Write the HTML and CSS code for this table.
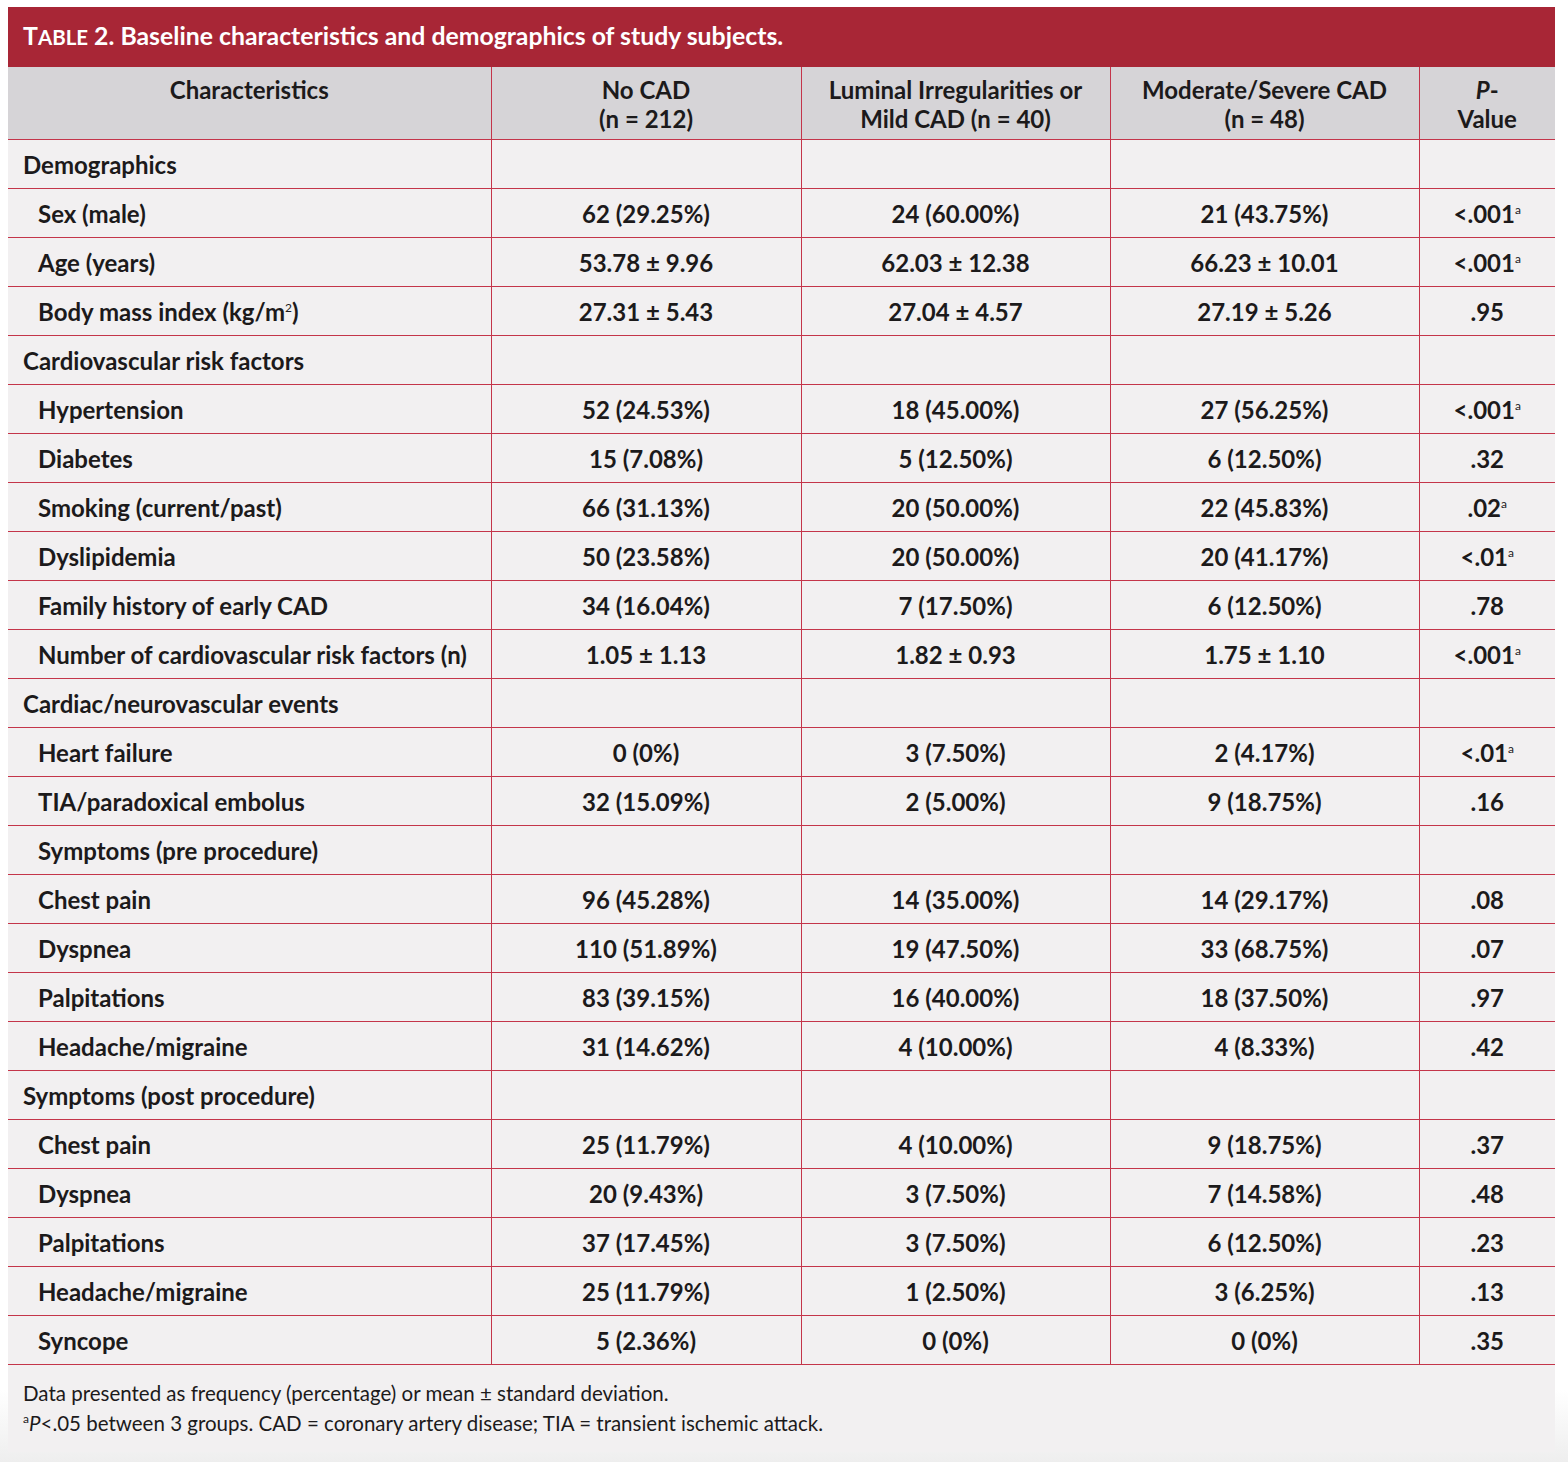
FILE: index.html
```html
<!DOCTYPE html>
<html lang="en">
<head>
<meta charset="utf-8">
<title>Table 2</title>
<link rel="stylesheet" href="styles.css">
</head>
<body>
<div class="card">
  <div class="caption"><span class="cap-text">T<span class="sc">able</span> 2. Baseline characteristics and demographics of study subjects.</span></div>
  <table class="data">
    <colgroup>
      <col class="c1"><col class="c2"><col class="c3"><col class="c4"><col class="c5">
    </colgroup>
    <thead>
      <tr>
        <th>Characteristics</th>
        <th>No CAD<br>(n = 212)</th>
        <th>Luminal Irregularities or<br>Mild CAD (n = 40)</th>
        <th>Moderate/Severe CAD<br>(n = 48)</th>
        <th><i>P</i>-<br>Value</th>
      </tr>
    </thead>
    <tbody>
      <tr class="sec"><td>Demographics</td><td></td><td></td><td></td><td></td></tr>
      <tr><td class="sub">Sex (male)</td><td>62 (29.25%)</td><td>24 (60.00%)</td><td>21 (43.75%)</td><td>&lt;.001<sup>a</sup></td></tr>
      <tr><td class="sub">Age (years)</td><td>53.78 ± 9.96</td><td>62.03 ± 12.38</td><td>66.23 ± 10.01</td><td>&lt;.001<sup>a</sup></td></tr>
      <tr><td class="sub">Body mass index (kg/m<sup>2</sup>)</td><td>27.31 ± 5.43</td><td>27.04 ± 4.57</td><td>27.19 ± 5.26</td><td>.95</td></tr>
      <tr class="sec"><td>Cardiovascular risk factors</td><td></td><td></td><td></td><td></td></tr>
      <tr><td class="sub">Hypertension</td><td>52 (24.53%)</td><td>18 (45.00%)</td><td>27 (56.25%)</td><td>&lt;.001<sup>a</sup></td></tr>
      <tr><td class="sub">Diabetes</td><td>15 (7.08%)</td><td>5 (12.50%)</td><td>6 (12.50%)</td><td>.32</td></tr>
      <tr><td class="sub">Smoking (current/past)</td><td>66 (31.13%)</td><td>20 (50.00%)</td><td>22 (45.83%)</td><td>.02<sup>a</sup></td></tr>
      <tr><td class="sub">Dyslipidemia</td><td>50 (23.58%)</td><td>20 (50.00%)</td><td>20 (41.17%)</td><td>&lt;.01<sup>a</sup></td></tr>
      <tr><td class="sub">Family history of early CAD</td><td>34 (16.04%)</td><td>7 (17.50%)</td><td>6 (12.50%)</td><td>.78</td></tr>
      <tr><td class="sub">Number of cardiovascular risk factors (n)</td><td>1.05 ± 1.13</td><td>1.82 ± 0.93</td><td>1.75 ± 1.10</td><td>&lt;.001<sup>a</sup></td></tr>
      <tr class="sec"><td>Cardiac/neurovascular events</td><td></td><td></td><td></td><td></td></tr>
      <tr><td class="sub">Heart failure</td><td>0 (0%)</td><td>3 (7.50%)</td><td>2 (4.17%)</td><td>&lt;.01<sup>a</sup></td></tr>
      <tr><td class="sub">TIA/paradoxical embolus</td><td>32 (15.09%)</td><td>2 (5.00%)</td><td>9 (18.75%)</td><td>.16</td></tr>
      <tr class="sec"><td class="sub">Symptoms (pre procedure)</td><td></td><td></td><td></td><td></td></tr>
      <tr><td class="sub">Chest pain</td><td>96 (45.28%)</td><td>14 (35.00%)</td><td>14 (29.17%)</td><td>.08</td></tr>
      <tr><td class="sub">Dyspnea</td><td>110 (51.89%)</td><td>19 (47.50%)</td><td>33 (68.75%)</td><td>.07</td></tr>
      <tr><td class="sub">Palpitations</td><td>83 (39.15%)</td><td>16 (40.00%)</td><td>18 (37.50%)</td><td>.97</td></tr>
      <tr><td class="sub">Headache/migraine</td><td>31 (14.62%)</td><td>4 (10.00%)</td><td>4 (8.33%)</td><td>.42</td></tr>
      <tr class="sec"><td>Symptoms (post procedure)</td><td></td><td></td><td></td><td></td></tr>
      <tr><td class="sub">Chest pain</td><td>25 (11.79%)</td><td>4 (10.00%)</td><td>9 (18.75%)</td><td>.37</td></tr>
      <tr><td class="sub">Dyspnea</td><td>20 (9.43%)</td><td>3 (7.50%)</td><td>7 (14.58%)</td><td>.48</td></tr>
      <tr><td class="sub">Palpitations</td><td>37 (17.45%)</td><td>3 (7.50%)</td><td>6 (12.50%)</td><td>.23</td></tr>
      <tr><td class="sub">Headache/migraine</td><td>25 (11.79%)</td><td>1 (2.50%)</td><td>3 (6.25%)</td><td>.13</td></tr>
      <tr><td class="sub">Syncope</td><td>5 (2.36%)</td><td>0 (0%)</td><td>0 (0%)</td><td>.35</td></tr>
    </tbody>
  </table>
  <div class="notes">
    <p>Data presented as frequency (percentage) or mean ± standard deviation.</p>
    <p><sup>a</sup><i>P</i>&lt;.05 between 3 groups. CAD = coronary artery disease; TIA = transient ischemic attack.</p>
  </div>
</div>
</body>
</html>
```
FILE: styles.css
```css
html {
  background: linear-gradient(to bottom, #ffffff 0, #ffffff 1390px, #eeeeee 1462px);
  min-height: 100%;
}
body {
  margin: 7px 13px 14px 8px;
  font-family: "Lato", "Liberation Sans", sans-serif;
  color: #1c1a1b;
}
.card {
  width: 1547px;
  background: #f2f0f1;
}
.caption {
  background: #a82636;
  color: #ffffff;
  height: 60px;
  box-sizing: border-box;
  padding: 0 15px 4px;
  display: flex;
  align-items: center;
  font-weight: 700;
  font-size: 24.8px;
}
.sc {
  text-transform: uppercase;
  font-size: 20.5px;
}
.data {
  width: 1547px;
  border-collapse: collapse;
  table-layout: fixed;
}
.c1 { width: 483px; }
.c2 { width: 310px; }
.c3 { width: 309px; }
.c4 { width: 309px; }
.c5 { width: 136px; }
.data th {
  background: #d6d4d7;
  height: 72px;
  box-sizing: border-box;
  font-weight: 700;
  font-size: 24px;
  line-height: 29px;
  text-align: center;
  vertical-align: top;
  padding: 8px 4px 0;
  border: 1px solid #c4354a;
  border-top: none;
}
.data td {
  height: 49px;
  box-sizing: border-box;
  font-weight: 700;
  font-size: 24px;
  line-height: 28px;
  text-align: center;
  vertical-align: middle;
  padding: 2px 4px 0;
  border: 1px solid #c4354a;
  white-space: nowrap;
}
.data th:first-child, .data td:first-child { border-left: none; }
.data th:last-child, .data td:last-child { border-right: none; }
.data td:first-child {
  text-align: left;
  padding-left: 15px;
}
.data td.sub {
  padding-left: 30px;
}
.data sup {
  font-size: 12px;
  vertical-align: 9px;
  line-height: 0;
  font-weight: 400;
}
.notes {
  padding: 13px 15px 14px;
  font-size: 20.5px;
  line-height: 30px;
  font-weight: 400;
}
.notes p {
  margin: 0;
}
.notes sup {
  font-size: 12px;
  vertical-align: 8px;
  line-height: 0;
}
```
